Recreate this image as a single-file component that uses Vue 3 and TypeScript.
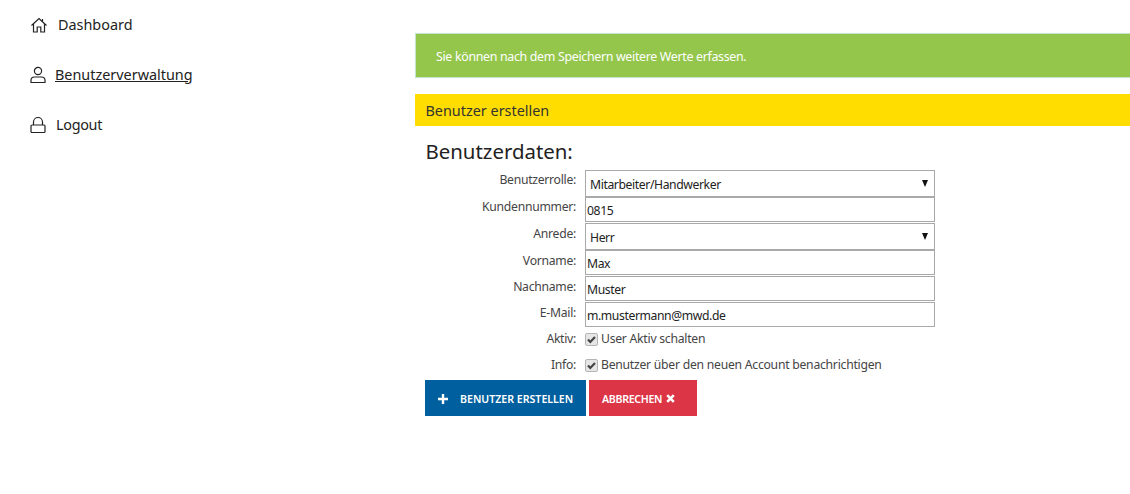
<script setup lang="ts">
const nav = [
  { label: 'Dashboard', icon: 'home', active: false },
  { label: 'Benutzerverwaltung', icon: 'user', active: true },
  { label: 'Logout', icon: 'lock', active: false },
]
</script>

<template>
  <div class="page">
    <aside class="side">
      <a v-for="n in nav" :key="n.label" class="nav" :class="n.icon">
        <svg width="18" height="18" viewBox="0 0 18 18" fill="none" stroke="#222" stroke-width="1.2">
          <template v-if="n.icon === 'home'">
            <path d="M1.500 9.500 9 2.500l7.500 7" />
            <path d="M3.500 8V16h3.700v-5h3.600v5h3.700V8" />
            <path d="M12.500 3V5.500" />
          </template>
          <template v-else-if="n.icon === 'user'">
            <circle cx="8" cy="5" r="3.600" />
            <path d="M1 16.500v-2.200c0-2 1.500-3.300 3.500-3.300h7c2 0 3.500 1.300 3.500 3.300v2.200z" />
          </template>
          <template v-else>
            <path d="M3.500 9V6a4.500 4.500 0 0 1 9 0v3" />
            <rect x="1" y="9" width="14" height="7.500" rx="1" />
          </template>
        </svg>
        <span :class="{ active: n.active }">{{ n.label }}</span>
      </a>
    </aside>
    <main class="main">
      <div class="alert">Sie können nach dem Speichern weitere Werte erfassen.</div>
      <div class="bar">Benutzer erstellen</div>
      <h2>Benutzerdaten:</h2>
      <form class="form" @submit.prevent>
        <div class="row tall">
          <label>Benutzerrolle:</label>
          <div class="sel"><select><option>Mitarbeiter/Handwerker</option></select><i></i></div>
        </div>
        <div class="row">
          <label>Kundennummer:</label>
          <input value="0815" />
        </div>
        <div class="row tall low">
          <label>Anrede:</label>
          <div class="sel"><select><option>Herr</option></select><i></i></div>
        </div>
        <div class="row low">
          <label>Vorname:</label>
          <input value="Max" />
        </div>
        <div class="row low">
          <label>Nachname:</label>
          <input value="Muster" />
        </div>
        <div class="row low">
          <label>E-Mail:</label>
          <input value="m.mustermann@mwd.de" />
        </div>
        <div class="row check">
          <label>Aktiv:</label>
          <input type="checkbox" checked />
          <span>User Aktiv schalten</span>
        </div>
        <div class="row check">
          <label>Info:</label>
          <input type="checkbox" checked />
          <span>Benutzer über den neuen Account benachrichtigen</span>
        </div>
        <div class="buttons">
          <button class="btn blue">
            <svg width="10" height="10" viewBox="0 0 10 10"><path d="M3.800 0h2.400v3.800H10v2.400H6.200V10H3.800V6.200H0V3.800h3.800z" fill="#fff" /></svg>
            BENUTZER ERSTELLEN
          </button>
          <button class="btn red">
            ABBRECHEN
            <svg width="9" height="9" viewBox="0 0 9 9"><path d="M1.200 1.200l6.600 6.600M7.800 1.200l-6.600 6.600" stroke="#fff" stroke-width="2.600" /></svg>
          </button>
        </div>
      </form>
    </main>
  </div>
</template>

<style>
html, body { margin: 0; background: #fff; }
</style>

<style scoped>
.page {
  display: flex;
  width: 1130px;
  height: 494px;
  overflow: hidden;
  font-family: "Noto Sans", sans-serif;
  color: #333;
}
.side {
  width: 415px;
  flex: none;
  box-sizing: border-box;
  padding-left: 30px;
}
.nav {
  display: flex;
  align-items: center;
  height: 50px;
  gap: 7px;
  font-size: 14.400px;
  color: #222;
}
.nav span { margin-top: -2px; }
.nav.home { gap: 10px; }
.nav.lock { gap: 8px; }
.nav.lock span { letter-spacing: -0.3px; }
.active { text-decoration: underline; }
.main { flex: 1; padding-top: 33px; min-width: 0; }
.alert {
  height: 45px;
  box-sizing: border-box;
  background: #93c64a;
  border: 1px solid #c3e6cb;
  border-right: 0;
  color: #fff;
  font-size: 12.400px;
  letter-spacing: -0.32px;
  line-height: 46px;
  padding-left: 20px;
}
.bar {
  margin-top: 16px;
  height: 32px;
  line-height: 33px;
  background: #ffdd00;
  padding-left: 10.500px;
  font-size: 14.400px;
  color: #333;
}
h2 {
  margin: 12px 0 0 10.500px;
  height: 32px;
  line-height: 26px;
  font-size: 20.400px;
  font-weight: 400;
  color: #222;
}
.form { font-size: 12.200px; }
.row { display: flex; align-items: flex-start; height: 26px; }
.row.tall { height: 27px; }
.row label {
  width: 161px;
  text-align: right;
  margin-right: 9px;
  line-height: 20px;
  color: #444;
  flex: none;
  letter-spacing: -0.28px;
}
.row.low label { padding-top: 1px; }
.row input:not([type]), .row select {
  width: 350px;
  box-sizing: border-box;
  font: inherit;
  letter-spacing: -0.4px;
  color: #222;
  background: #fff;
  border: 1px solid #a9a9a9;
  outline: none;
  border-radius: 0;
}
.row input:not([type]) { height: 25px; padding: 1px 1px 0; }
.sel { position: relative; width: 350px; height: 27px; }
.row select {
  appearance: none;
  height: 26.500px;
  padding: 3px 4px 0;
  display: block;
}
.sel i {
  position: absolute;
  right: 7px;
  top: 10px;
  width: 0;
  height: 0;
  border-left: 3.500px solid transparent;
  border-right: 3.500px solid transparent;
  border-top: 7px solid #111;
  pointer-events: none;
}
.check label { padding-top: 1px; }
.check input {
  appearance: none;
  margin: 5px 3px 0 0;
  width: 13px;
  height: 13px;
  flex: none;
  box-sizing: border-box;
  border: 1px solid #b5b5b5;
  border-radius: 2px;
  background: #e6e6e6 url("data:image/svg+xml,%3Csvg xmlns='http://www.w3.org/2000/svg' viewBox='0 0 13 13'%3E%3Cpath d='M3 6.500l2.300 2.500 4.700-5' fill='none' stroke='%23444' stroke-width='2.200'/%3E%3C/svg%3E") center / 13px 13px no-repeat;
}
.check span { color: #444; line-height: 20px; padding-top: 1px; letter-spacing: -0.25px; }
.buttons { display: flex; gap: 3px; margin: 0 0 0 10px; }
.btn {
  height: 36px;
  border: 0;
  color: #fff;
  font: 600 10.600px "Noto Sans", sans-serif;
  display: flex;
  align-items: center;
  padding: 1px 0 0;
}
.blue { width: 161px; background: #005f9e; gap: 12px; padding-left: 13px; }
.red { width: 108px; background: #dc3545; gap: 4px; padding-left: 13px; letter-spacing: -0.3px; }
</style>
